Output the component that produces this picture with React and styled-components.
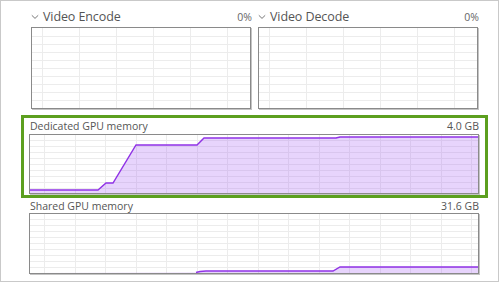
import styled, { createGlobalStyle } from "styled-components";

const GlobalStyle = createGlobalStyle`
    body {
        margin: 0;
        background: #ffffff;
        font-family: "Open Sans", "Noto Sans", sans-serif;
    }
`;

const StyledPanel = styled.div`
    box-sizing: border-box;
    width: 499px;
    height: 282px;
    border: 1px solid #c9c9c9;
    padding: 0 10px 0 20px;
    display: flex;
    flex-direction: column;
    background: #ffffff;
`;

const StyledEngineRow = styled.div`
    display: grid;
    grid-template-columns: 220px 220px;
    gap: 7px;
    margin-left: 10px;
`;

const StyledEngine = styled.section`
    display: flex;
    flex-direction: column;
`;

const StyledEngineHeader = styled.div`
    height: 26px;
    box-sizing: border-box;
    padding-top: 5px;
    display: flex;
    align-items: center;
    gap: 4px;
    line-height: 20px;
    color: #555555;
    align-self: stretch;
    h2 {
        margin: 0;
        font-size: 12.5px;
        font-weight: 400;
        flex: 1;
        letter-spacing: -0.1px;
    }
    span {
        font-size: 10.5px;
        color: #666666;
        margin-right: -1px;
    }
`;

const StyledHighlight = styled.section`
    margin-top: 6px;
    border: 3px solid #5c9f1f;
    padding: 0 5px 1px 5px;
    display: flex;
    flex-direction: column;
`;

const StyledShared = styled.section`
    margin: 0 8px;
    display: flex;
    flex-direction: column;
`;

const StyledLabelRow = styled.div`
    display: flex;
    justify-content: space-between;
    align-items: center;
    height: ${(p) => p.$height}px;
    padding: 0 1px;
    font-size: 10.5px;
    color: #555555;
    line-height: 14px;
`;

const StyledGraph = styled.div`
    box-sizing: border-box;
    width: ${(p) => p.$width}px;
    height: ${(p) => p.$height}px;
    border: 1px solid #8a8a8a;
    box-shadow: 1px 1px 0 #c4c4c4;
    background: #ffffff;
    svg {
        display: block;
    }
`;

const Chevron = () => (
    <svg width="8" height="6" viewBox="0 0 8 6">
        <path d="M0.8 1.3 L4 4.4 L7.2 1.3" fill="none" stroke="#777" strokeWidth="1" />
    </svg>
);

const Graph = ({ width, height, colStep, colStart, rowStep, rowStart, points }) => {
    const w = width - 2;
    const h = height - 2;
    const cols = [];
    for (let x = colStart; x < w; x += colStep) cols.push(Math.round(x) + 0.5);
    const rows = [];
    for (let y = rowStart; y < h; y += rowStep) rows.push(Math.round(y) + 0.5);
    const line = points ? points.map((p, i) => `${i ? "L" : "M"}${p[0]} ${p[1]}`).join(" ") : null;
    const fill = points ? `${line} L${w} ${h} L0 ${h} Z` : null;
    return (
        <StyledGraph $width={width} $height={height}>
            <svg width={w} height={h} viewBox={`0 0 ${w} ${h}`}>
                {cols.map((x) => (
                    <line key={"c" + x} x1={x} y1={0} x2={x} y2={h} stroke="#ececec" strokeWidth="1" />
                ))}
                {rows.map((y) => (
                    <line key={"r" + y} x1={0} y1={y} x2={w} y2={y} stroke="#ececec" strokeWidth="1" />
                ))}
                {points && (
                    <>
                        <path d={fill} fill="rgba(170, 100, 245, 0.28)" />
                        <path d={line} fill="none" stroke="#9032e6" strokeWidth="1.4" />
                    </>
                )}
            </svg>
        </StyledGraph>
    );
};

const dedicated = [
    [0, 55], [68, 55], [76, 48], [83, 48], [106, 10], [167, 10],
    [174, 3], [306, 3], [310, 2], [448, 2],
];

const shared = [
    [166, 58.5], [170, 57.5], [176, 57], [303, 57], [310, 53], [448, 53],
];

const engines = [
    { name: "Video Encode", value: "0%" },
    { name: "Video Decode", value: "0%" },
];

const App = () => {
    return (
        <>
            <GlobalStyle />
            <StyledPanel>
                <StyledEngineRow>
                    {engines.map((e) => (
                        <StyledEngine key={e.name}>
                            <StyledEngineHeader>
                                <Chevron />
                                <h2>{e.name}</h2>
                                <span>{e.value}</span>
                            </StyledEngineHeader>
                            <Graph width={220} height={82} colStep={37} colStart={10} rowStep={8} rowStart={8} />
                        </StyledEngine>
                    ))}
                </StyledEngineRow>
                <StyledHighlight>
                    <StyledLabelRow $height={16}>
                        <span>Dedicated GPU memory</span>
                        <span>4.0 GB</span>
                    </StyledLabelRow>
                    <Graph width={450} height={60} colStep={30.5} colStart={14} rowStep={6} rowStart={5} points={dedicated} />
                </StyledHighlight>
                <StyledShared>
                    <StyledLabelRow $height={15}>
                        <span>Shared GPU memory</span>
                        <span>31.6 GB</span>
                    </StyledLabelRow>
                    <Graph width={450} height={61} colStep={30.5} colStart={14} rowStep={6} rowStart={5} points={shared} />
                </StyledShared>
            </StyledPanel>
        </>
    );
};

export default App;
